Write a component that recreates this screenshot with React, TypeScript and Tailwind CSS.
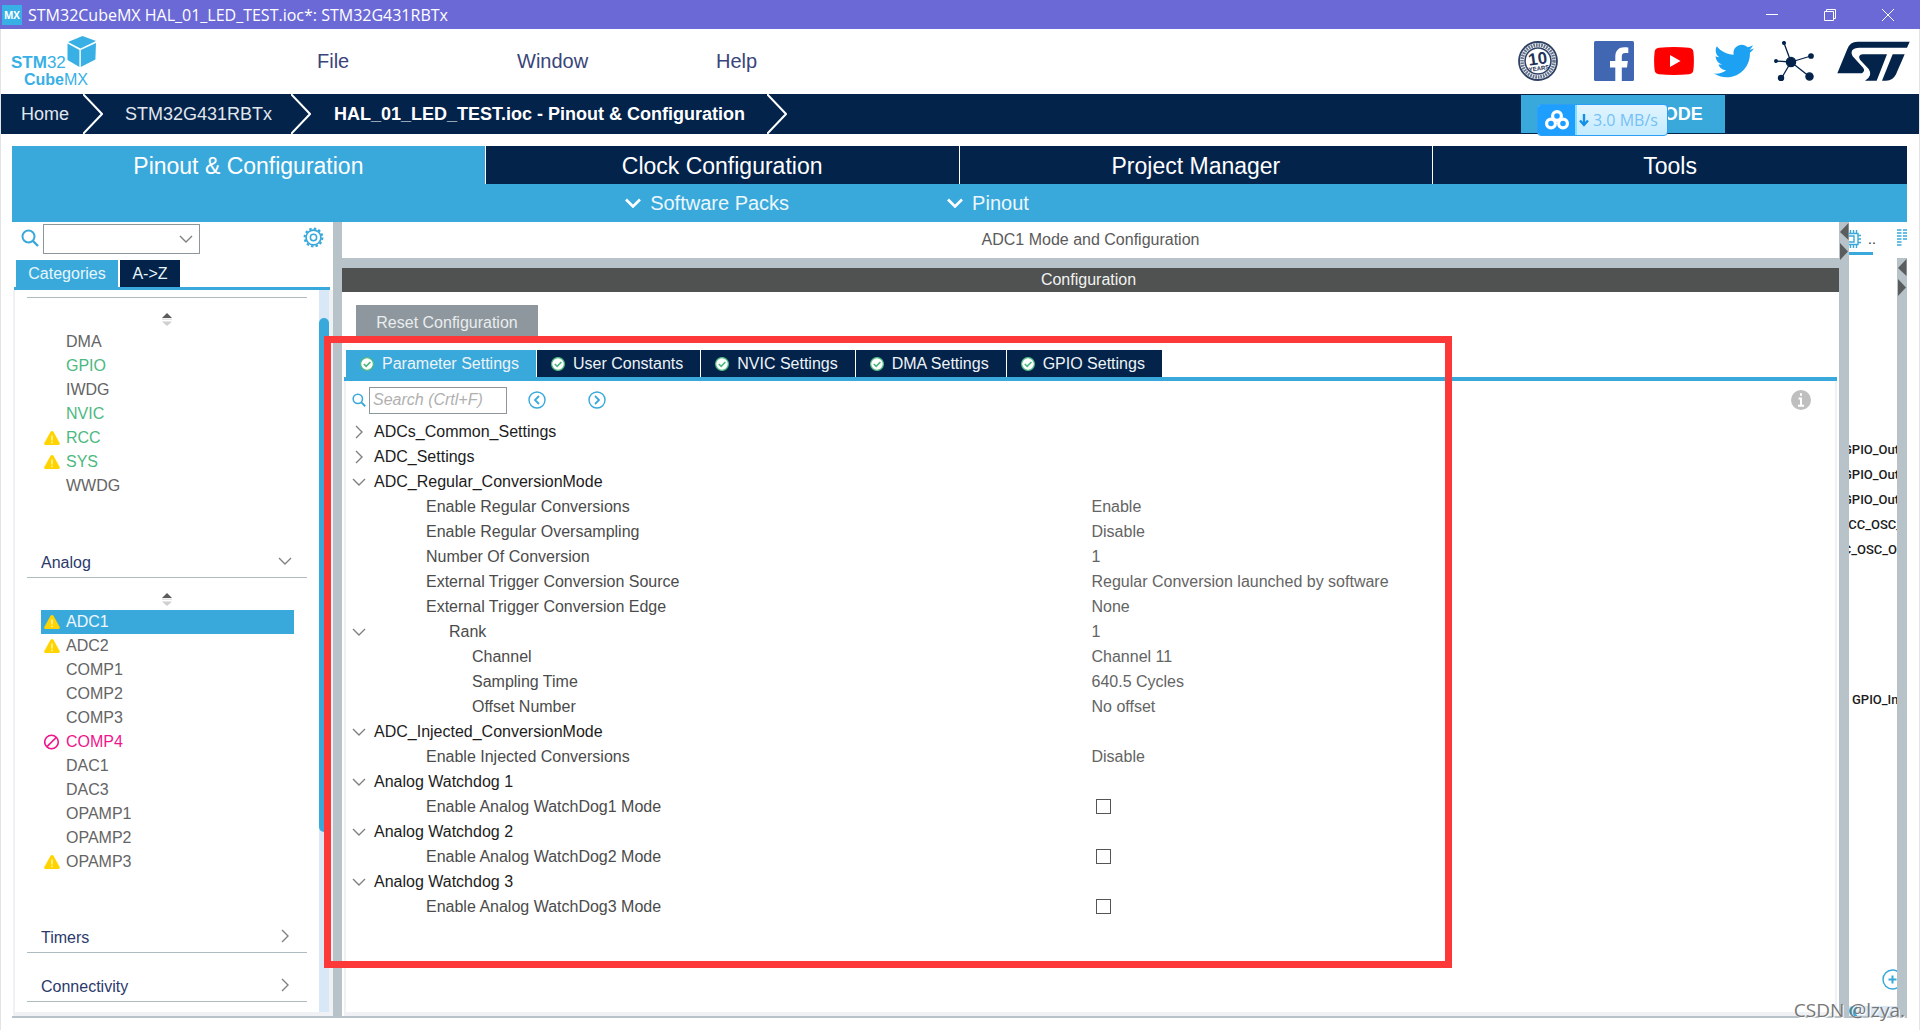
import { useState } from "react";
import { FaTwitter } from "react-icons/fa";

type Mark = "warn" | "ban";

type Peripheral = {
  name: string;
  mark?: Mark;
  color?: string;
};

type Param = {
  label: string;
  level: 0 | 1 | 2 | 3;
  value?: string;
  check?: boolean;
  toggle?: "open" | "closed";
};

const SYSTEM_CORE: Peripheral[] = [
  { name: "DMA" },
  { name: "GPIO", color: "text-[#4cb97f]" },
  { name: "IWDG" },
  { name: "NVIC", color: "text-[#4cb97f]" },
  { name: "RCC", mark: "warn", color: "text-[#4cb97f]" },
  { name: "SYS", mark: "warn", color: "text-[#4cb97f]" },
  { name: "WWDG" },
];

const ANALOG: Peripheral[] = [
  { name: "ADC1", mark: "warn" },
  { name: "ADC2", mark: "warn" },
  { name: "COMP1" },
  { name: "COMP2" },
  { name: "COMP3" },
  { name: "COMP4", mark: "ban", color: "text-[#f0148c]" },
  { name: "DAC1" },
  { name: "DAC3" },
  { name: "OPAMP1" },
  { name: "OPAMP2" },
  { name: "OPAMP3", mark: "warn" },
];

const PARAMS: Param[] = [
  { label: "ADCs_Common_Settings", level: 0, toggle: "closed" },
  { label: "ADC_Settings", level: 0, toggle: "closed" },
  { label: "ADC_Regular_ConversionMode", level: 0, toggle: "open" },
  { label: "Enable Regular Conversions", level: 1, value: "Enable" },
  { label: "Enable Regular Oversampling", level: 1, value: "Disable" },
  { label: "Number Of Conversion", level: 1, value: "1" },
  { label: "External Trigger Conversion Source", level: 1, value: "Regular Conversion launched by software" },
  { label: "External Trigger Conversion Edge", level: 1, value: "None" },
  { label: "Rank", level: 2, value: "1", toggle: "open" },
  { label: "Channel", level: 3, value: "Channel 11" },
  { label: "Sampling Time", level: 3, value: "640.5 Cycles" },
  { label: "Offset Number", level: 3, value: "No offset" },
  { label: "ADC_Injected_ConversionMode", level: 0, toggle: "open" },
  { label: "Enable Injected Conversions", level: 1, value: "Disable" },
  { label: "Analog Watchdog 1", level: 0, toggle: "open" },
  { label: "Enable Analog WatchDog1 Mode", level: 1, check: true },
  { label: "Analog Watchdog 2", level: 0, toggle: "open" },
  { label: "Enable Analog WatchDog2 Mode", level: 1, check: true },
  { label: "Analog Watchdog 3", level: 0, toggle: "open" },
  { label: "Enable Analog WatchDog3 Mode", level: 1, check: true },
];

const LEVEL_STYLE = [
  "pl-[8px] text-[#1c1c1c]",
  "pl-[60px] text-[#4b4b4b]",
  "pl-[83px] text-[#4b4b4b]",
  "pl-[106px] text-[#4b4b4b]",
];

const MAIN_TABS = ["Pinout & Configuration", "Clock Configuration", "Project Manager", "Tools"];
const CONFIG_TABS = ["Parameter Settings", "User Constants", "NVIC Settings", "DMA Settings", "GPIO Settings"];

function Magnifier({ className }: { className: string }) {
  return (
    <svg viewBox="0 0 18 18" className={className} fill="none" stroke="#39a9dc" strokeWidth="2">
      <circle cx="7.5" cy="7.5" r="6" />
      <path d="M12 12l5 5" strokeWidth="2.4" />
    </svg>
  );
}

function Chevron({ dir }: { dir: "down" | "right" }) {
  return (
    <svg viewBox="0 0 14 14" className="h-[14px] w-[14px]" fill="none" stroke="#808080" strokeWidth="1.4">
      {dir === "down" ? <path d="M1 4l6 6 6-6" /> : <path d="M4 1l6 6-6 6" />}
    </svg>
  );
}

function Crumb() {
  return (
    <svg viewBox="0 0 20 40" className="h-10 w-5 shrink-0" fill="none" stroke="#fff" strokeWidth="2">
      <path d="M0 0l19 20L0 40" />
    </svg>
  );
}

function MarkIcon({ mark }: { mark?: Mark }) {
  if (mark === "warn") {
    return (
      <svg viewBox="0 0 16 14" className="h-[14px] w-4">
        <path d="M8 0Q9 0 9.6 1L15.8 12.2Q16.2 14 14.6 14H1.4Q-.2 14 .2 12.2L6.4 1Q7 0 8 0Z" fill="#ffd400" />
        <path d="M8 4.4v5M8 10.8v1.4" stroke="#fff5b8" strokeWidth="1.4" />
      </svg>
    );
  }
  if (mark === "ban") {
    return (
      <svg viewBox="0 0 16 16" className="h-4 w-4" fill="none" stroke="#f0148c" strokeWidth="1.6">
        <circle cx="7.5" cy="8" r="6.8" />
        <path d="M3 12.6l9.4-9.4" />
      </svg>
    );
  }
  return null;
}

function CheckDot() {
  return (
    <svg viewBox="0 0 14 14" className="h-[14px] w-[14px]">
      <circle cx="7" cy="7" r="6.4" fill="#fff" stroke="#4cb97f" strokeWidth="1.2" />
      <path d="M3.8 7l2.4 2.4 4.2-4.4" fill="none" stroke="#4cb97f" strokeWidth="1.7" />
    </svg>
  );
}

function SortArrows() {
  return (
    <svg viewBox="0 0 10 13" className="mx-auto mt-[15px] block h-[13px] w-[10px]">
      <path d="M0 5L5 0l5 5Z" fill="#5c5c5c" />
      <path d="M0 6.2h10" stroke="#d9d9d9" />
      <path d="M0 8.4h10L5 13Z" fill="#cfcfcf" />
    </svg>
  );
}

function SplitArrows() {
  return (
    <svg viewBox="0 0 10 38" className="h-[38px] w-[10px]" fill="#5a5d5e">
      <path d="M9.5 1v17L1 10Z" />
      <path d="M1 21v17l8-8.5Z" />
    </svg>
  );
}

function PeripheralList({ items, selected, onSelect }: { items: Peripheral[]; selected: string; onSelect: (name: string) => void }) {
  return (
    <ul className="ml-[14px] mr-[13px] mt-1">
      {items.map(p => (
        <li key={p.name}>
          <button
            onClick={() => onSelect(p.name)}
            className={`flex h-6 w-full items-center gap-[6px] pl-[3px] text-left ${selected === p.name ? "bg-[#39a9dc] text-[#eef8fd]" : p.color ?? "text-[#646464]"}`}
          >
            <span className="w-4 shrink-0"><MarkIcon mark={p.mark} /></span>
            {p.name}
          </button>
        </li>
      ))}
    </ul>
  );
}

function CategoryHeader({ title, open }: { title: string; open?: boolean }) {
  return (
    <button className="flex h-[29px] w-full items-center justify-between border-b border-[#aebbc1] pl-[14px] pr-[15px] text-left text-[#2b3a6b]">
      {title}
      <span className="-mt-1"><Chevron dir={open ? "down" : "right"} /></span>
    </button>
  );
}

function CubeLogo() {
  return (
    <svg viewBox="0 0 90 56" className="h-14 w-[90px]" fill="#39b0e5">
      <path d="M59 9L73.500 3 87 8 71.500 15.500Z" />
      <path d="M58.500 10.500L70.400 17V34L58.500 27Z" />
      <path d="M71.800 17L87 10 86.400 26.500 71.800 34Z" />
      <text x="2" y="35" fontSize="17" fontFamily="'Liberation Sans Narrow', 'Liberation Sans', sans-serif">
        <tspan fontWeight="700">STM</tspan>32
      </text>
      <text x="15" y="52" fontSize="16" fontFamily="'Liberation Sans Narrow', 'Liberation Sans', sans-serif">
        <tspan fontWeight="700">Cube</tspan>MX
      </text>
    </svg>
  );
}

function AnniversaryBadge() {
  return (
    <svg viewBox="0 0 40 40" className="h-10 w-10" fill="none" stroke="#2f4264">
      <circle cx="20" cy="20" r="19" strokeWidth="1.8" />
      <circle cx="20" cy="20" r="16" strokeWidth="3.6" strokeDasharray="1.8 .8" stroke="#66758f" />
      <circle cx="20" cy="20" r="13" fill="#fff" strokeWidth="1.6" />
      <g fill="#1e3358" stroke="none" fontFamily="'Liberation Sans', sans-serif" fontWeight="700" transform="rotate(-8 20 20)">
        <text x="20" y="23.500" fontSize="17" textAnchor="middle">10</text>
        <text x="20" y="29.500" fontSize="6" textAnchor="middle">YEARS</text>
      </g>
    </svg>
  );
}

function TitleBar() {
  return (
    <div className="flex h-[29px] items-center bg-[#6b69d6] pl-[2px] font-['Open_Sans','Noto_Sans',sans-serif] text-white">
      <span className="flex h-5 w-5 items-center justify-center bg-[#39b0e5] text-[10px] font-bold">MX</span>
      <span className="ml-[6px] text-[16px]">STM32CubeMX HAL_01_LED_TEST.ioc*: STM32G431RBTx</span>
      <div className="ml-auto flex gap-[34px] pr-[20px]">
        <button aria-label="Minimize" className="flex w-6 justify-center">
          <svg viewBox="0 0 12 12" className="h-3 w-3" stroke="#fff"><path d="M0 5.500h12" /></svg>
        </button>
        <button aria-label="Restore" className="flex w-6 justify-center">
          <svg viewBox="0 0 12 12" className="h-3 w-3" fill="none" stroke="#fff"><path d="M.5 2.500h9v9h-9ZM2.500 2.500v-2h9v9h-2" /></svg>
        </button>
        <button aria-label="Close" className="flex w-6 justify-center">
          <svg viewBox="0 0 12 12" className="h-3 w-3" stroke="#fff"><path d="M0 0l12 12M12 0L0 12" /></svg>
        </button>
      </div>
    </div>
  );
}

function MenuBar() {
  return (
    <header className="flex h-[65px] items-center pb-[2px] pl-2 pr-[9px]">
      <CubeLogo />
      <nav className="ml-[218px] flex text-[20px] text-[#39457a]">
        <button className="w-[200px] text-left">File</button>
        <button className="w-[199px] text-left">Window</button>
        <button>Help</button>
      </nav>
      <div className="ml-auto flex items-center">
        <a href="#anniversary" aria-label="10 years"><AnniversaryBadge /></a>
        <a href="#facebook" aria-label="Facebook" className="ml-9">
          <svg viewBox="0 0 40 40" className="h-10 w-10">
            <rect width="40" height="40" rx="1.500" fill="#4267b2" />
            <path d="M21.300 40V26.500H16V20h5.300v-4.500c0-6 3.600-9.300 9-9.300 1.800 0 3.200.1 4 .3v5.600h-3.200c-2.600 0-3.300 1.300-3.300 3.200V20h6l-.8 6.500h-5.200V40Z" fill="#fff" />
          </svg>
        </a>
        <a href="#youtube" aria-label="YouTube" className="ml-5">
          <svg viewBox="0 0 40 28" className="h-7 w-10">
            <path d="M5 .8Q20-.6 35 .8 39 1.200 39.400 5 40.400 14 39.400 23 39 26.800 35 27.200 20 28.600 5 27.200 1 26.800.6 23-.4 14 .6 5 1 1.200 5 .8Z" fill="#f00" />
            <path d="M16 8v12l10.500-6Z" fill="#fff" />
          </svg>
        </a>
        <a href="#twitter" aria-label="Twitter" className="ml-5 text-[#1da1f2]"><FaTwitter className="h-10 w-10" /></a>
        <a href="#community" aria-label="Community" className="ml-5">
          <svg viewBox="0 0 40 40" className="h-10 w-10" fill="#03234b" stroke="#03234b" strokeWidth="1.300">
            <path d="M17 21L10 2M17 21L1.500 20M17 21L37 15M17 21L36 36M17 21L7 38" />
            <circle cx="17" cy="21" r="4.600" />
            <circle cx="10" cy="2" r="1.400" />
            <circle cx="2" cy="20" r="1.300" />
            <circle cx="37" cy="15" r="2.200" />
            <circle cx="35.500" cy="35.500" r="3.600" />
            <circle cx="7" cy="37" r="2.600" />
          </svg>
        </a>
        <a href="#st" aria-label="ST" className="ml-[23px]">
          <svg viewBox="1072 124 217 120" className="h-10 w-[73px]" fill="#03234b">
            <path d="M1072 221L1102 148Q1110 126 1132 126H1289L1281 144H1138Q1106 146 1118 170L1150 205Q1156 214 1146 221Z" />
            <path d="M1148 164H1221L1190 243H1155Q1180 228 1166 208L1140 180Q1132 166 1148 164Z" />
            <path d="M1238 164H1274L1248 224Q1239 243 1218 243H1206Z" />
          </svg>
        </a>
      </div>
    </header>
  );
}

function Breadcrumbs() {
  return (
    <div className="relative flex h-10 items-center bg-[#03234b] pl-5 text-[18px] text-[#e1e7ee]">
      <a href="#home" className="w-[62px]">Home</a>
      <Crumb />
      <a href="#device" className="w-[188px] pl-[22px]">STM32G431RBTx</a>
      <Crumb />
      <span className="w-[456px] pl-[23px] font-bold text-white">HAL_01_LED_TEST.ioc - Pinout &amp; Configuration</span>
      <Crumb />
      <button className="ml-auto mr-[194px] h-[38px] w-[204px] bg-[#39a9dc] pl-1 font-bold text-white">GENERATE CODE</button>
      {/* download speed widget floats over the button */}
      <div className="absolute right-[251px] top-[10px] flex h-8 w-[131px] overflow-hidden rounded border border-[#2d9ff5] bg-gradient-to-b from-[#e2f5ff] to-[#c3ebff] font-['Open_Sans','Noto_Sans',sans-serif] text-[16px] text-[#77bff5]">
        <span className="flex w-[37px] items-center justify-center bg-[#1e9fff]">
          <svg viewBox="0 0 24 20" className="h-5 w-6" fill="none" stroke="#fff" strokeWidth="3.200">
            <circle cx="12" cy="6" r="4.400" />
            <circle cx="6" cy="13.500" r="4.400" />
            <circle cx="18" cy="13.500" r="4.400" />
          </svg>
        </span>
        <span className="w-[2px] bg-[#7fe0fb]" />
        <span className="flex items-center gap-1 whitespace-nowrap pl-[2px]">
          <svg viewBox="0 0 10 13" className="h-[13px] w-[10px]" fill="none" stroke="#1590e8" strokeWidth="2.400">
            <path d="M5 0v11M1 6.500l4 4.500 4-4.500" />
          </svg>
          3.0 MB/s
        </span>
      </div>
    </div>
  );
}

function SubMenu({ label }: { label: string }) {
  return (
    <button className="flex items-center gap-[9px]">
      <svg viewBox="0 0 16 10" className="h-[10px] w-4" fill="none" stroke="#fff" strokeWidth="2.600">
        <path d="M1 1.500l7 7 7-7" />
      </svg>
      {label}
    </button>
  );
}

function Sidebar() {
  const [selected, setSelected] = useState("ADC1");

  return (
    <aside className="flex w-[321px] shrink-0 flex-col">
      <div className="flex h-[38px] items-start pl-[9px] pr-[9px] pt-[2px]">
        <Magnifier className="mt-[5px] h-[18px] w-[18px]" />
        <div className="relative ml-1 h-[30px] w-[157px]">
          <select aria-label="Search peripheral" className="h-full w-full appearance-none border border-[#8d969b] bg-white">
            <option></option>
          </select>
          <span className="pointer-events-none absolute right-[7px] top-[8px]"><Chevron dir="down" /></span>
        </div>
        <button aria-label="Settings" className="ml-auto mt-[3px]">
          <svg viewBox="0 0 22 22" className="h-[21px] w-[21px]" fill="none" stroke="#39a9dc">
            <circle cx="11" cy="11" r="9.300" strokeWidth="2.200" strokeDasharray="2.600 2.270" />
            <circle cx="11" cy="11" r="7.800" strokeWidth="1.800" />
            <circle cx="11" cy="11" r="3.300" strokeWidth="1.600" />
          </svg>
        </button>
      </div>
      <div className="ml-[2px] mr-[3px] flex gap-[2px] border-b-[3px] border-[#39a9dc] pl-[2px]">
        <button className="h-[27px] w-[102px] bg-[#39a9dc] text-[#e8f6fc]">Categories</button>
        <button className="h-[27px] w-[60px] bg-[#03234b] text-[#e8f6fc]">A-&gt;Z</button>
      </div>
      <div className="ml-px flex flex-1 border-b-4 border-l-2 border-r-4 border-[#eff1f4]">
        <div className="min-w-0 flex-1 px-3 pt-[7px]">
          <div className="border-t border-[#aebbc1]" />
          <SortArrows />
          <PeripheralList items={SYSTEM_CORE} selected={selected} onSelect={setSelected} />
          <div className="mt-[51px]"><CategoryHeader title="Analog" open /></div>
          <SortArrows />
          <PeripheralList items={ANALOG} selected={selected} onSelect={setSelected} />
          <div className="mt-[50px]"><CategoryHeader title="Timers" /></div>
          <div className="mt-5"><CategoryHeader title="Connectivity" /></div>
        </div>
        <div className="w-[10px] bg-[#d9e8f6] pt-7">
          <div className="h-[514px] rounded-full bg-[#39a9dc]" />
        </div>
      </div>
    </aside>
  );
}

function ParameterTable() {
  return (
    <table className="w-full table-fixed text-left">
      <tbody>
        {PARAMS.map(p => (
          <tr key={p.label} className="h-[25px]">
            <th scope="row" className="w-1/2 p-0 font-normal">
              <div className="flex items-center pl-[6px]">
                <span className="w-[14px]">
                  {p.toggle && (
                    <button aria-label={`Toggle ${p.label}`} className="block">
                      <Chevron dir={p.toggle === "open" ? "down" : "right"} />
                    </button>
                  )}
                </span>
                {p.check ? (
                  <label htmlFor={p.label} className={LEVEL_STYLE[p.level]}>{p.label}</label>
                ) : (
                  <span className={LEVEL_STYLE[p.level]}>{p.label}</span>
                )}
              </div>
            </th>
            <td className="p-0 pl-px text-[#646464]">
              {p.check ? (
                <input id={p.label} type="checkbox" className="ml-[4px] block h-[15px] w-[15px] appearance-none border border-[#555] bg-white checked:bg-[#39a9dc]" />
              ) : (
                p.value
              )}
            </td>
          </tr>
        ))}
      </tbody>
    </table>
  );
}

function ConfigPanel() {
  const [tab, setTab] = useState(CONFIG_TABS[0]);

  return (
    <main className="flex min-w-0 flex-1 flex-col">
      <h1 className="flex h-9 items-center justify-center text-[#5a5a5a]">ADC1 Mode and Configuration</h1>
      <div className="h-[10px] bg-[#b7c3c9]" />
      <h2 className="flex h-6 items-center justify-center bg-[#4f5250] pr-1 text-[#f2f2f2]">Configuration</h2>
      <div className="mt-[13px] pl-[14px]">
        <button className="h-[34px] w-[182px] bg-[#8e979d] pt-px text-[#e9edef]">Reset Configuration</button>
      </div>
      <div className="mx-[2px] mt-[11px] flex gap-px border-b-4 border-[#39a9dc] pl-[2px]">
        {CONFIG_TABS.map(t => (
          <button
            key={t}
            onClick={() => setTab(t)}
            className={`flex h-[27px] items-center gap-2 pl-[14px] pr-[17px] text-[#eef3f7] ${tab === t ? "bg-[#39a9dc]" : "bg-[#03234b]"}`}
          >
            <CheckDot />
            {t}
          </button>
        ))}
      </div>
      <div className="mx-[2px] flex-1 border-x-2 border-b-4 border-[#eff1f4]">
        <div className="flex h-[38px] items-center pl-[6px] pr-6">
          <Magnifier className="h-[14px] w-[14px]" />
          <input
            type="text"
            aria-label="Search parameters"
            placeholder="Search (Crtl+F)"
            className="ml-[3px] h-[27px] w-[138px] border border-[#8d969b] px-[3px] outline-none placeholder:italic placeholder:text-[#b0b0b0]"
          />
          <button aria-label="Previous match" className="ml-[21px]">
            <svg viewBox="0 0 18 18" className="h-[18px] w-[18px]" fill="none" stroke="#39a9dc">
              <circle cx="9" cy="9" r="8" strokeWidth="1.400" />
              <path d="M11 5L7 9l4 4" strokeWidth="1.800" />
            </svg>
          </button>
          <button aria-label="Next match" className="ml-[42px]">
            <svg viewBox="0 0 18 18" className="h-[18px] w-[18px]" fill="none" stroke="#39a9dc">
              <circle cx="9" cy="9" r="8" strokeWidth="1.400" />
              <path d="M7 5l4 4-4 4" strokeWidth="1.800" />
            </svg>
          </button>
          <button aria-label="Information" className="ml-auto">
            <svg viewBox="0 0 20 20" className="h-5 w-5">
              <circle cx="10" cy="10" r="10" fill="#bfbfbf" />
              <path d="M10 3.200v2.600M7.500 8.500H10v7M7 15.800h6" fill="none" stroke="#fff" strokeWidth="2" />
            </svg>
          </button>
        </div>
        <ParameterTable />
      </div>
    </main>
  );
}

function PinStrip() {
  return (
    <section className="flex w-[58px] shrink-0 flex-col">
      <div className="flex h-9 items-start justify-between">
        <div className="w-6 border-b-[3px] border-[#39a9dc] pb-1 pt-2">
          <div className="flex items-end gap-[7px]">
            <svg viewBox="0 0 12 18" className="h-[18px] w-3 shrink-0" fill="none" stroke="#39a9dc" strokeWidth="1.400">
              <path d="M0 3.500h9v11H0M0 6h5v6H0" />
              <path d="M1.500 0v3M4.500 0v3M7.500 0v3M1.500 15v3M4.500 15v3M7.500 15v3M9 5.500h3M9 9h3M9 12.500h3" />
            </svg>
            <span className="text-[14px] leading-[18px] text-[#333]">..</span>
          </div>
        </div>
        <svg viewBox="0 0 10 18" className="mt-[7px] h-[18px] w-[10px]" stroke="#39a9dc" strokeWidth="1.600">
          <path d="M0 1h4.500M6 1h4M0 4h4.500M6 4h4M0 7h4.500M6 7h4M0 10h4.500M6 10h4M0 13h4.500M0 16h4.500" />
        </svg>
      </div>
      <div className="flex flex-1">
        <div className="flex w-12 flex-col overflow-hidden whitespace-nowrap font-['Roboto',sans-serif] text-[13px] font-medium leading-[25px] text-[#1c1c1c]">
          <div className="mt-[179px]">
            <p className="-ml-[6px]">GPIO_Output</p>
            <p className="-ml-[6px]">GPIO_Output</p>
            <p className="-ml-[6px]">GPIO_Output</p>
            <p className="-ml-[9px]">RCC_OSC_IN</p>
            <p className="-ml-[23px]">RCC_OSC_OUT</p>
          </div>
          <p className="mt-[125px] pl-[3px]">GPIO_Input</p>
          <button aria-label="Zoom in" className="ml-[33px] mt-auto w-[21px]">
            <svg viewBox="0 0 21 21" className="h-[21px] w-[21px]" fill="none" stroke="#39a9dc">
              <circle cx="10.500" cy="10.500" r="9.500" strokeWidth="1.500" />
              <path d="M10.500 6.500v8M6.500 10.500h8" strokeWidth="2" />
            </svg>
          </button>
          <div className="mt-4 h-[10px] bg-[#d9e8f6]">
            <div className="h-full w-2 rounded-l-full bg-[#39a9dc]" />
          </div>
        </div>
        <div className="w-[10px] bg-[#b7c3c9]"><SplitArrows /></div>
      </div>
    </section>
  );
}

export default function App() {
  const [mainTab, setMainTab] = useState(MAIN_TABS[0]);

  return (
    <div className="flex min-h-screen flex-col bg-white font-['Liberation_Sans',Arial,sans-serif] text-[16px] leading-5">
      <TitleBar />
      <div className="flex flex-1 flex-col border-x border-[#e4e4e6] pb-3">
        <MenuBar />
        <Breadcrumbs />
        <div className="ml-[11px] mr-3 mt-3 flex flex-1 flex-col">
          <div className="grid grid-cols-4 divide-x divide-white">
            {MAIN_TABS.map(t => (
              <button
                key={t}
                onClick={() => setMainTab(t)}
                className={`h-[38px] pt-[2px] text-[23px] text-white ${mainTab === t ? "bg-[#39a9dc]" : "bg-[#03234b]"}`}
              >
                {t}
              </button>
            ))}
          </div>
          <div className="flex h-[38px] items-center justify-center gap-[158px] bg-[#39a9dc] pr-[265px] text-[20px] text-[#ecf7fc]">
            <SubMenu label="Software Packs" />
            <SubMenu label="Pinout" />
          </div>
          <div className="relative flex flex-1 border-b-2 border-[#b7c3c9]">
            <Sidebar />
            <div className="w-[9px] shrink-0 bg-[#b7c3c9]" />
            <ConfigPanel />
            <div className="w-[10px] shrink-0 bg-[#b7c3c9]"><SplitArrows /></div>
            <PinStrip />
            <div className="pointer-events-none absolute bottom-12 left-[312px] right-[455px] top-[114px] border-[7px] border-[#fc3838]" />
            <span className="pointer-events-none absolute -bottom-[6px] right-[2px] font-['Open_Sans','Noto_Sans',sans-serif] text-[19px] leading-6 text-[#777777] [text-shadow:1px_1px_0_#ffffff]">
              CSDN @lzya.
            </span>
          </div>
        </div>
      </div>
    </div>
  );
}
